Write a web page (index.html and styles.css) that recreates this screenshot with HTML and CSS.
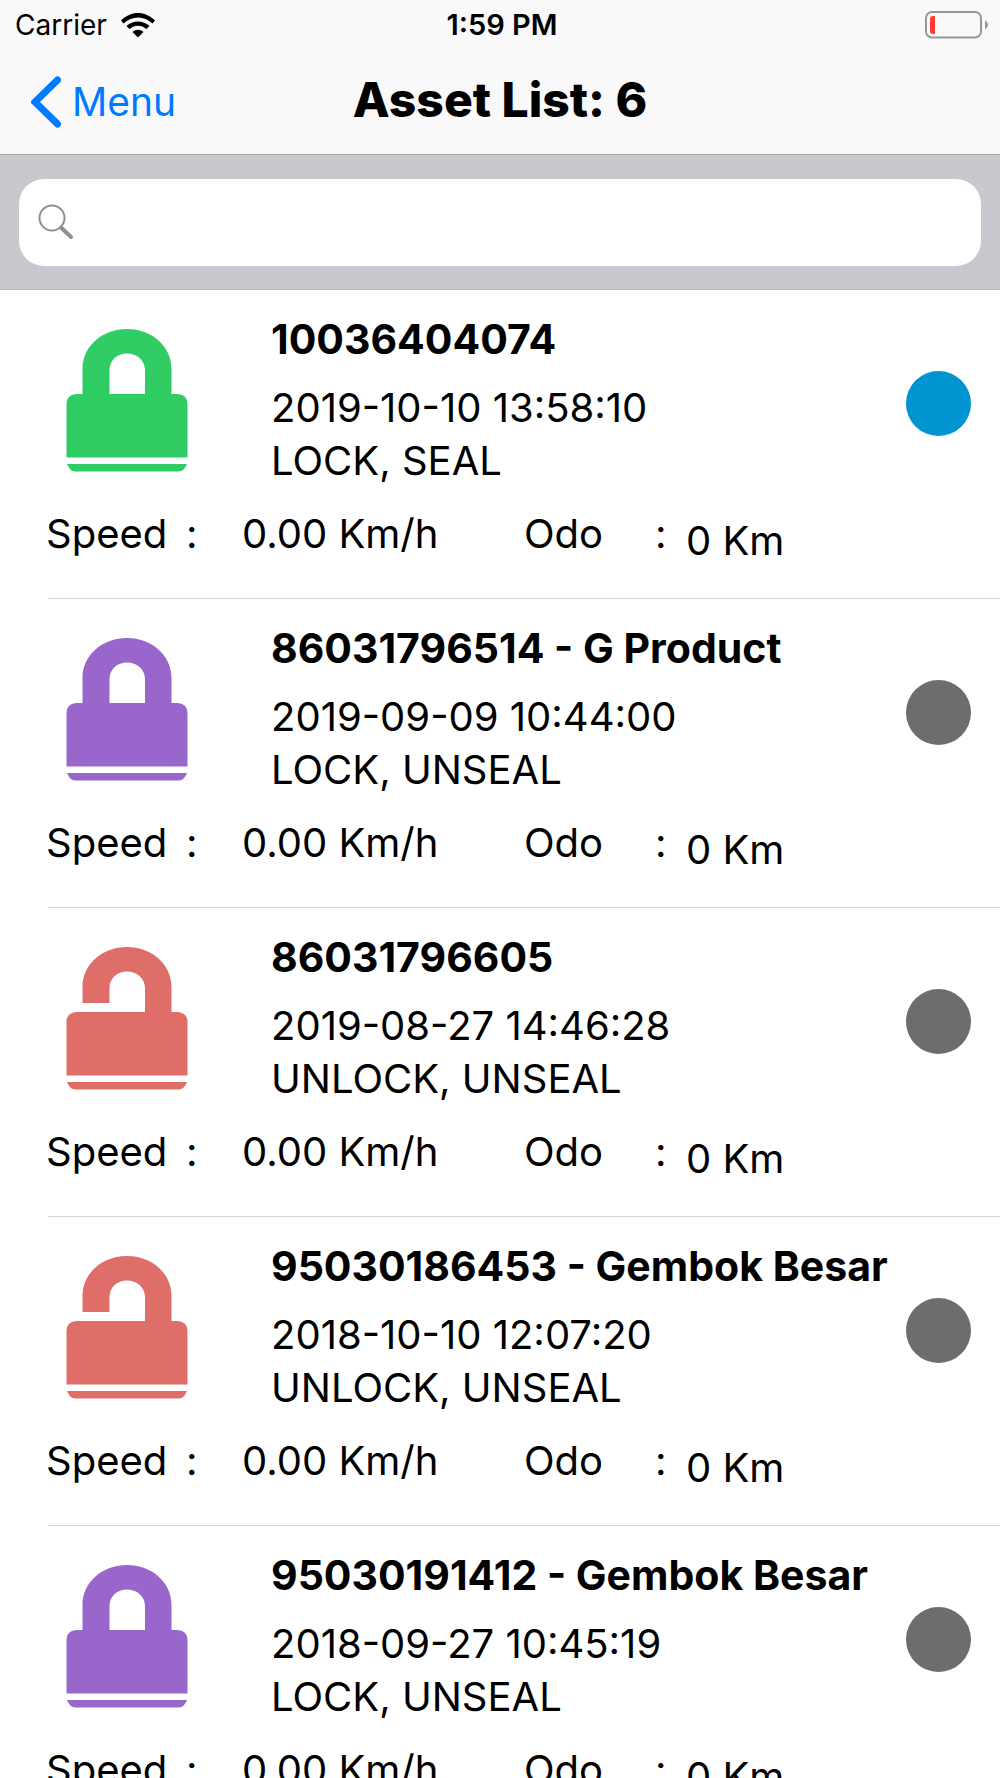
FILE: index.html
```html
<!DOCTYPE html>
<html lang="en">
<head>
<meta charset="utf-8">
<meta name="viewport" content="width=device-width, initial-scale=1">
<title>Asset List</title>
<link rel="stylesheet" href="styles.css">
</head>
<body>
<svg class="symbols" aria-hidden="true">
  <symbol id="locked" viewBox="0 0 122 143">
    <path fill-rule="evenodd" d="M16.500 65V40C16.500 17 36.500 0 61 0S105.500 17 105.500 40V65H112Q121.500 66 121.500 75V128.500H0.500V75Q0.500 66 10 65ZM43.500 65H79V41C79 31 70.500 24.500 61 24.500S43.500 31 43.500 41Z"/>
    <path d="M1 135H121Q118 142.500 113 142.500H9Q4 142.500 1 135Z"/>
  </symbol>
  <symbol id="unlocked" viewBox="0 0 122 143">
    <path d="M10 65H79V41C79 31 70.500 24.500 61 24.500S43.500 31 43.500 41V56H16.500V40C16.500 17 36.500 0 61 0S105.500 17 105.500 40V65H112Q121.500 66 121.500 75V128.500H0.500V75Q0.500 66 10 65Z"/>
    <path d="M1 135H121Q118 142.500 113 142.500H9Q4 142.500 1 135Z"/>
  </symbol>
</svg>
<header class="header">
  <div class="status-bar">
    <div class="carrier">
      <span>Carrier</span>
      <svg class="wifi" viewBox="0 0 34 24" aria-hidden="true">
        <path d="M0 7.500C10-2.500 24-2.500 34 7.500L31.500 10.500C23 2.500 11 2.500 2.500 10.500Z"/>
        <path d="M5.500 13C12 7 22 7 28.500 13L25.500 16C20.500 11.500 13.500 11.500 8.500 16Z"/>
        <path d="M11.500 19C14.500 16 19.500 16 22.500 19L17 24.500Z"/>
      </svg>
    </div>
    <time class="clock">1:59 PM</time>
    <svg class="battery" viewBox="0 0 64 28" role="img" aria-label="Battery low">
      <rect x="1" y="1" width="55" height="25.500" rx="6" fill="none" stroke="#979797" stroke-width="2"/>
      <path d="M60 9Q63 11 63 13.800T60 18.500Z" fill="#979797"/>
      <path d="M10 5V23H8Q5 23 5 20V8Q5 5 8 5Z" fill="#ff3b30"/>
    </svg>
  </div>
  <nav class="nav-bar">
    <a class="back" href="#menu">
      <svg class="chevron" viewBox="0 0 30 52" aria-hidden="true"><path d="M26.500 4L4 26L26.500 48"/></svg>
      <span>Menu</span>
    </a>
    <h1 class="title">Asset List: 6</h1>
  </nav>
</header>
<form class="search-bar" role="search">
  <label class="search-field">
    <svg class="search-icon" viewBox="0 0 36 36" aria-hidden="true"><circle cx="14" cy="14" r="12.500"/><path d="M23 23.500L33 33"/></svg>
    <input class="search-input" type="search" aria-label="Search assets">
  </label>
</form>
<ul class="assets">
  <li class="asset">
    <div class="summary">
      <svg class="lock lock-green" aria-hidden="true"><use href="#locked"/></svg>
      <div class="details"><h2 class="name">10036404074</h2><p>2019-10-10 13:58:10</p><p>LOCK, SEAL</p></div>
      <span class="dot dot-online"></span>
    </div>
    <div class="stats"><span>Speed</span><span>:</span><span>0.00 Km/h</span><span>Odo</span><span>:</span><span class="odo">0 Km</span></div>
  </li>
  <li class="asset">
    <div class="summary">
      <svg class="lock lock-purple" aria-hidden="true"><use href="#locked"/></svg>
      <div class="details"><h2 class="name">86031796514 - G Product</h2><p>2019-09-09 10:44:00</p><p>LOCK, UNSEAL</p></div>
      <span class="dot"></span>
    </div>
    <div class="stats"><span>Speed</span><span>:</span><span>0.00 Km/h</span><span>Odo</span><span>:</span><span class="odo">0 Km</span></div>
  </li>
  <li class="asset">
    <div class="summary">
      <svg class="lock lock-red" aria-hidden="true"><use href="#unlocked"/></svg>
      <div class="details"><h2 class="name">86031796605</h2><p>2019-08-27 14:46:28</p><p>UNLOCK, UNSEAL</p></div>
      <span class="dot"></span>
    </div>
    <div class="stats"><span>Speed</span><span>:</span><span>0.00 Km/h</span><span>Odo</span><span>:</span><span class="odo">0 Km</span></div>
  </li>
  <li class="asset">
    <div class="summary">
      <svg class="lock lock-red" aria-hidden="true"><use href="#unlocked"/></svg>
      <div class="details"><h2 class="name">95030186453 - Gembok Besar</h2><p>2018-10-10 12:07:20</p><p>UNLOCK, UNSEAL</p></div>
      <span class="dot"></span>
    </div>
    <div class="stats"><span>Speed</span><span>:</span><span>0.00 Km/h</span><span>Odo</span><span>:</span><span class="odo">0 Km</span></div>
  </li>
  <li class="asset">
    <div class="summary">
      <svg class="lock lock-purple" aria-hidden="true"><use href="#locked"/></svg>
      <div class="details"><h2 class="name">95030191412 - Gembok Besar</h2><p>2018-09-27 10:45:19</p><p>LOCK, UNSEAL</p></div>
      <span class="dot"></span>
    </div>
    <div class="stats"><span>Speed</span><span>:</span><span>0.00 Km/h</span><span>Odo</span><span>:</span><span class="odo">0 Km</span></div>
  </li>
</ul>
</body>
</html>
```
FILE: styles.css
```css
* {
  box-sizing: border-box;
  margin: 0;
  padding: 0;
}

body {
  display: flex;
  flex-direction: column;
  height: 100vh;
  overflow: hidden;
  background: #fff;
  color: #000;
  font-family: Inter, "Liberation Sans", sans-serif;
  font-size: 40px;
  line-height: 53px;
}

.symbols {
  display: none;
}

.header {
  flex: none;
  background: #f9f9f9;
  border-bottom: 1px solid #a5a5aa;
}

.status-bar {
  display: grid;
  grid-template-columns: 1fr auto 1fr;
  align-items: center;
  height: 50px;
  padding: 0 11px 0 15px;
  font-size: 28px;
  line-height: 50px;
}

.carrier {
  display: flex;
  align-items: center;
  gap: 14px;
}

.wifi {
  width: 34px;
  height: 24px;
}

.clock {
  font-size: 29px;
  font-weight: 600;
}

.battery {
  justify-self: end;
  width: 64px;
  height: 28px;
}

.nav-bar {
  display: grid;
  grid-template-columns: 1fr auto 1fr;
  align-items: center;
  height: 104px;
  padding: 0 31px 6px;
}

.back {
  display: flex;
  align-items: center;
  gap: 11px;
  color: #007aff;
  font-size: 39px;
  text-decoration: none;
  padding-top: 5px;
}

.chevron {
  width: 30px;
  height: 52px;
  fill: none;
  stroke: #007aff;
  stroke-width: 7;
  stroke-linecap: round;
}

.title {
  font-size: 48px;
  font-weight: 800;
}

.search-bar {
  flex: none;
  padding: 24px 19px 23px;
  background: #c9c8ce;
  border-bottom: 1px solid #b9b8be;
}

.search-field {
  display: flex;
  align-items: center;
  gap: 16px;
  height: 87px;
  padding: 0 19px 2px;
  background: #fff;
  border-radius: 25px;
}

.search-icon {
  flex: none;
  width: 36px;
  height: 36px;
  fill: none;
  stroke: #8e8e93;
  stroke-width: 2;
  stroke-linecap: round;
}

.search-icon path {
  stroke-width: 4;
}

.search-input {
  flex: 1;
  min-width: 0;
  border: 0;
  outline: 0;
  background: transparent;
  font: inherit;
}

.assets {
  flex: 1;
  min-height: 0;
  overflow-y: auto;
  scrollbar-width: none;
  list-style: none;
}

.asset {
  margin-left: 48px;
  padding: 23px 0 38px;
  border-bottom: 1px solid #d5d5d8;
}

.summary {
  display: flex;
  align-items: center;
  padding: 0 29px 0 18px;
}

.lock {
  flex: none;
  width: 122px;
  height: 143px;
}

.lock-green { fill: #30cd64; }
.lock-purple { fill: #9966cb; }
.lock-red { fill: #df6e69; }

.details {
  flex: 1;
  min-width: 0;
  padding-left: 83px;
  white-space: nowrap;
}

.name {
  margin-bottom: 15px;
  font-size: 41px;
  font-weight: 700;
}

.dot {
  flex: none;
  width: 65px;
  height: 65px;
  margin-top: 6px;
  border-radius: 50%;
  background: #6d6d6d;
}

.dot-online {
  background: #0094d0;
}

.stats {
  display: grid;
  grid-template-columns: 140px 56px 282px 131px 31px 1fr;
  height: 53px;
  margin: 20px 0 0 -2px;
  white-space: nowrap;
}

.odo {
  padding-top: 7px;
}
```
